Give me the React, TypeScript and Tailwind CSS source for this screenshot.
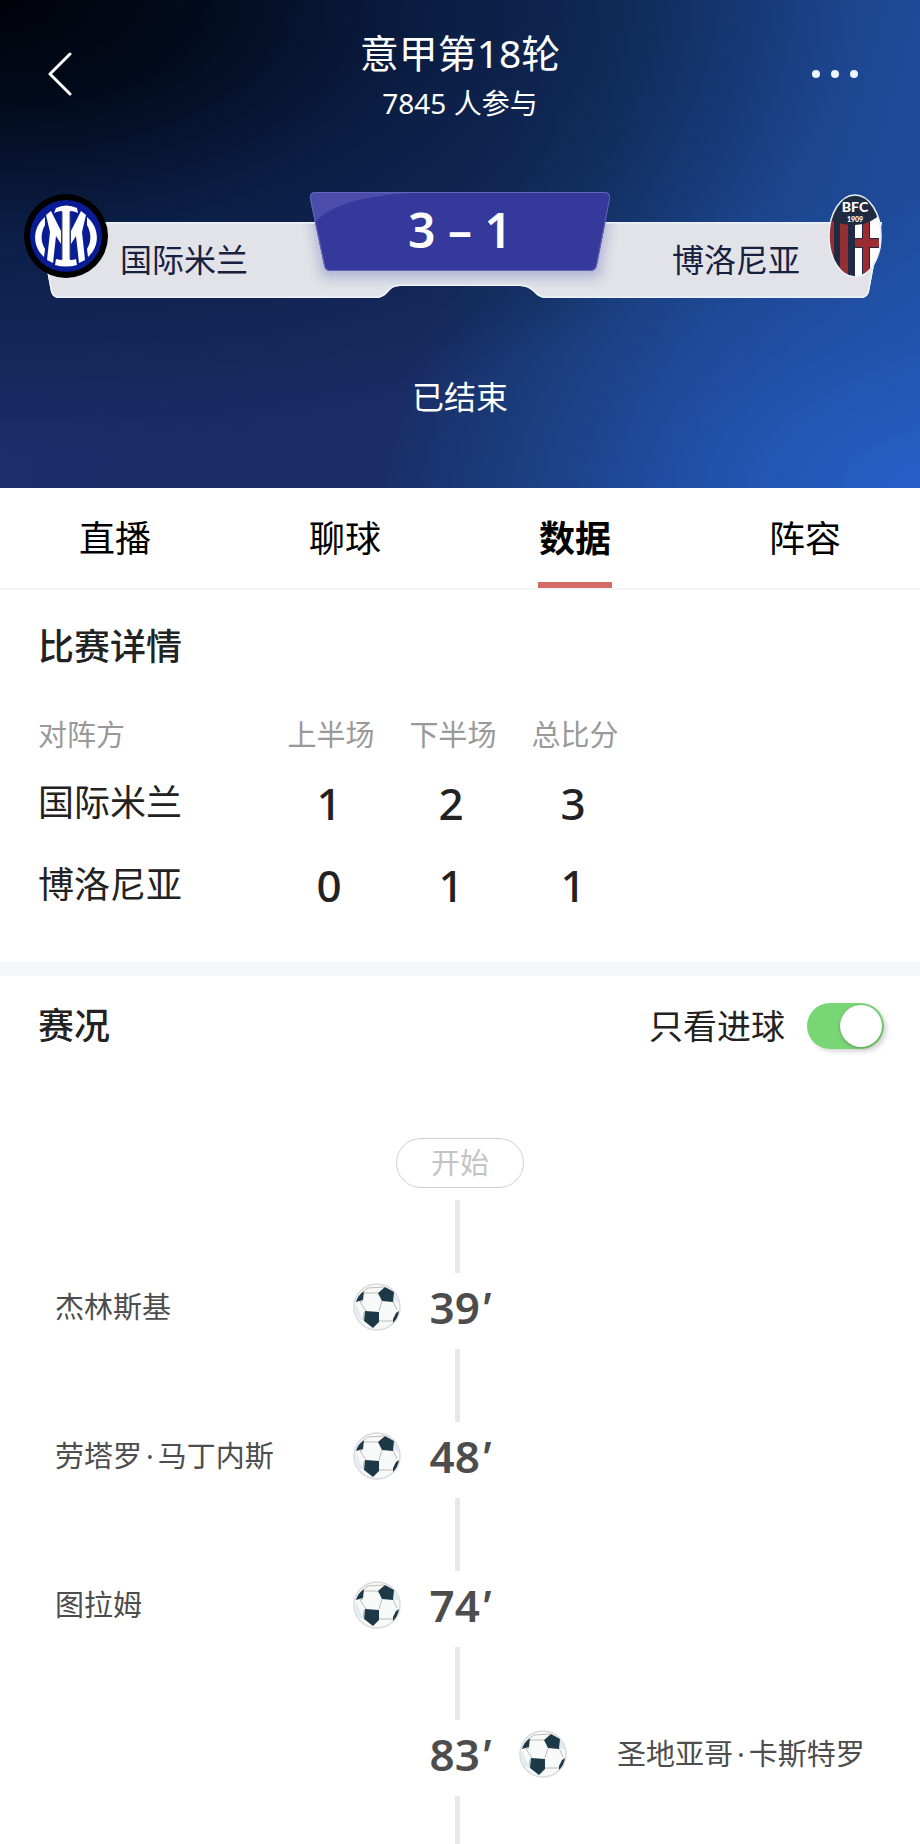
import { useState } from "react";

const tabs = ["直播", "聊球", "数据", "阵容"];

const scores = [
  { team: "国际米兰", first: 1, second: 2, total: 3 },
  { team: "博洛尼亚", first: 0, second: 1, total: 1 },
];

type Goal = { minute: number; player: string; side: "home" | "away" };

const goals: Goal[] = [
  { minute: 39, player: "杰林斯基", side: "home" },
  { minute: 48, player: "劳塔罗·马丁内斯", side: "home" },
  { minute: 74, player: "图拉姆", side: "home" },
  { minute: 83, player: "圣地亚哥·卡斯特罗", side: "away" },
];

function InterLogo() {
  return (
    <svg viewBox="0 0 84 84" className="size-[84px] shrink-0" role="img" aria-label="国际米兰">
      <circle cx="42" cy="42" r="42" fill="#000" />
      <circle cx="42" cy="42" r="36" fill="#0a1b96" />
      <g fill="#fff">
        <path d="M21 23C8 34 8 52 20 63L21 55C16 47 17 38 21 31Z" />
        <path d="M63 23C76 34 76 52 64 63L63 55C68 47 67 38 63 31Z" />
        <path d="M22 21L27 17L37 37V50L32 42L29 69L23 66L26 38Z" />
        <path d="M62 21L57 17L47 37V50L52 42L55 69L61 66L58 38Z" />
        <path d="M30 19L32 14Q42 9 53 14L54 19Q50 17 46 17V66Q50 66 52 65L53 71Q42 74 31 71L32 65Q36 66 38 66V17Q34 17 30 19Z" />
      </g>
      <path d="M38 18V65M46 18V65" stroke="#4a5068" strokeWidth="1" />
    </svg>
  );
}

function BolognaLogo() {
  return (
    <svg viewBox="0 0 54 84" className="h-[84px] w-[54px] shrink-0" role="img" aria-label="博洛尼亚">
      <defs>
        <clipPath id="bfc-oval">
          <ellipse cx="27" cy="42" rx="26" ry="41" />
        </clipPath>
      </defs>
      <g clipPath="url(#bfc-oval)">
        <path fill="#202b42" d="M0 0h54v84H0z" />
        <path fill="#942f35" d="M0 26h6v58H0zM12 28h8v56h-8z" />
        <path fill="#fff" d="M27 28L50 17H54V84H27z" />
        <path fill="#202b42" d="M34 28h8v16h9v10h-9v30h-8V54h-7V44h7z" />
        <path fill="#9c2c32" d="M35 28h6v17h10v8H41v31h-6V53h-8v-8h8z" />
        <path fill="#202b42" d="M0 0H54V18Q43 31 27 31Q12 31 0 25Z" />
      </g>
      <ellipse cx="27" cy="42" rx="26" ry="41" fill="none" stroke="#e8f0fa" strokeWidth="1.5" />
      <text x="27" y="18" textAnchor="middle" fill="#fff" fontSize="14" fontWeight="900" fontFamily="Lato, sans-serif">
        BFC
      </text>
      <text x="27" y="28" textAnchor="middle" fill="#fff" fontSize="7" fontWeight="900" fontFamily="Lato, sans-serif">
        1909
      </text>
    </svg>
  );
}

function Football() {
  return (
    <svg viewBox="0 0 48 48" className="size-12 shrink-0" aria-hidden="true">
      <circle cx="24" cy="24" r="23" fill="#f8f9f9" stroke="#d9dade" strokeWidth="1.5" />
      <g fill="none" stroke="#bdbdb2" strokeWidth="1">
        <path d="M11 10H25M10 18L7 19L13 28M29 18L26 28M40 18L44 27M26 38H40M11 29L10 37M11 8L15 5L31 4" />
      </g>
      <path d="M40 8Q45 13 46 20L41 18ZM3 20Q1 28 6 36L10 38Z" fill="#e2ebf1" />
      <g fill="#1d3947">
        <path d="M32 4L41 9L40 19L29 18L25 10Z" />
        <path d="M12 28L26 29V39L20 45L11 38Z" />
        <path d="M11 8L10 17L3 19Q5 12 11 8Z" />
        <path d="M46 28Q45 35 40 40L40 36L43 30Z" />
      </g>
    </svg>
  );
}

// Slanted plate behind both team names, plus the score badge in the middle
function ScorePlate() {
  return (
    <svg viewBox="0 0 872 108" preserveAspectRatio="none" className="absolute inset-0 size-full" aria-hidden="true">
      <defs>
        <clipPath id="badge-clip">
          <path d="M292 0H580Q587 0 586 7L573 73Q572 79 566 79H306Q301 79 300 73L286 7Q285 0 292 0Z" />
        </clipPath>
        <filter id="badge-shadow" x="-10%" y="-10%" width="120%" height="150%">
          <feGaussianBlur stdDeviation="6" />
        </filter>
        <clipPath id="plate-clip">
          <path d="M14 30H858L845 100Q843 106 837 106H522Q515 106 510 100Q504 94 496 94H376Q368 94 364 100Q359 106 352 106H35Q29 106 27 100Z" />
        </clipPath>
      </defs>
      <path
        d="M14 30H858L845 100Q843 106 837 106H522Q515 106 510 100Q504 94 496 94H376Q368 94 364 100Q359 106 352 106H35Q29 106 27 100Z"
        fill="#e1e3e8"
      />
      <g clipPath="url(#plate-clip)">
        <path d="M284 10H588L576 86H298Z" fill="#7c7fc0" opacity="0.45" filter="url(#badge-shadow)" />
        <path
          d="M14 30H858L845 100Q843 106 837 106H522Q515 106 510 100Q504 94 496 94H376Q368 94 364 100Q359 106 352 106H35Q29 106 27 100Z"
          fill="none"
          stroke="#edf3fc"
          strokeWidth="3"
        />
      </g>
      <g clipPath="url(#badge-clip)">
        <path d="M280 0H590V80H280Z" fill="#36399c" />
        <path d="M280 0H400Q310 4 290 32H280Z" fill="#4c4dab" />
        <path
          d="M292 0H580Q587 0 586 7L573 73Q572 79 566 79H306Q301 79 300 73L286 7Q285 0 292 0Z"
          fill="none"
          stroke="#6165b8"
          strokeWidth="2"
        />
      </g>
    </svg>
  );
}

function MatchHeader() {
  return (
    <header className="bg-[radial-gradient(ellipse_at_0%_0%,#000208_0%,rgba(0,8,22,0.92)_15%,rgba(3,24,54,0.65)_35%,rgba(6,32,74,0)_66%),radial-gradient(ellipse_at_100%_100%,rgba(42,100,212,0.75)_0%,rgba(42,100,212,0.25)_22%,rgba(42,100,212,0)_42%),linear-gradient(106deg,#1e2d6c_0%,#1a2c64_48%,#18376f_60%,#1b4389_75%,#2050a4_100%)] pb-[67px] text-white">
      <div className="grid grid-cols-[1fr_auto_1fr] items-start px-12 pt-7">
        <button type="button" aria-label="返回" className="flex h-23 w-6 items-center">
          <svg viewBox="0 0 24 44" className="h-11 w-6" fill="none" stroke="currentColor" strokeWidth="3">
            <path d="M22 2L2 22L22 42" strokeLinecap="round" strokeLinejoin="round" />
          </svg>
        </button>
        <div className="text-center">
          <h1 className="text-[39px] leading-[50px]">意甲第18轮</h1>
          <p className="text-[28px] leading-[50px]">7845 人参与</p>
        </div>
        <button type="button" aria-label="更多" className="flex h-23 items-center gap-[11px] justify-self-end pr-3.5">
          <span className="size-2 rounded-full bg-[#eef6ff]" />
          <span className="size-2 rounded-full bg-[#eef6ff]" />
          <span className="size-2 rounded-full bg-[#eef6ff]" />
        </button>
      </div>

      <div className="relative mx-6 mt-16 h-[108px]">
        <ScorePlate />
        <div className="relative grid h-22 grid-cols-[1fr_300px_1fr] text-[32px] leading-8 text-[#18203f]">
          <div className="flex items-center gap-3">
            <InterLogo />
            <span className="mt-12">国际米兰</span>
          </div>
          <p className="text-center text-[48px] leading-19 font-semibold text-white">3 – 1</p>
          <div className="flex items-center justify-end gap-7 pr-3.5">
            <span className="mt-12">博洛尼亚</span>
            <BolognaLogo />
          </div>
        </div>
      </div>

      <p className="mt-[73px] text-center text-[32px] leading-12">已结束</p>
    </header>
  );
}

function PlayerName({ name }: { name: string }) {
  const [first, last] = name.split("·");
  return (
    <span>
      {first}
      {last && <span className="mx-1">·</span>}
      {last}
    </span>
  );
}

function GoalRow({ goal }: { goal: Goal }) {
  return (
    <li className="mb-2 grid h-17 grid-cols-[1fr_118px_1fr] items-center text-[29px] text-[#4d4d4d]">
      <div className="flex items-center justify-between pl-[55px]">
        {goal.side === "home" && (
          <>
            <PlayerName name={goal.player} />
            <Football />
          </>
        )}
      </div>
      <span className="text-center text-[44px] leading-16 font-semibold">
        {goal.minute}
        <i>'</i>
      </span>
      <div className="flex items-center gap-[50px]">
        {goal.side === "away" && (
          <>
            <Football />
            <PlayerName name={goal.player} />
          </>
        )}
      </div>
    </li>
  );
}

export default function App() {
  const [activeTab, setActiveTab] = useState("数据");
  const [goalsOnly, setGoalsOnly] = useState(true);

  return (
    <div className="flex min-h-screen flex-col bg-white font-['Noto_Sans','Noto_Sans_CJK_SC',sans-serif] text-[#222]">
      <MatchHeader />

      <nav className="grid grid-cols-4 border-b-2 border-[#f5f5f5]">
        {tabs.map((tab) => (
          <button
            key={tab}
            type="button"
            onClick={() => setActiveTab(tab)}
            className={
              tab === activeTab
                ? "flex h-[100px] flex-col items-center pt-2 text-[36px] leading-[86px] font-bold text-black"
                : "flex h-[100px] flex-col items-center pt-2 text-[36px] leading-[86px] text-black"
            }
          >
            {tab}
            {tab === activeTab && <span className="h-1.5 w-[74px] shrink-0 bg-[#d66a66]" />}
          </button>
        ))}
      </nav>

      <section className="px-[38px] pt-8 pb-9">
        <h2 className="text-[36px] leading-[50px] font-medium">比赛详情</h2>
        <table className="mt-9 table-fixed text-left">
          <thead className="text-[29px] text-[#999]">
            <tr className="h-[54px]">
              <th className="w-[232px] font-normal">对阵方</th>
              <th className="w-[122px] text-center font-normal">上半场</th>
              <th className="w-[122px] text-center font-normal">下半场</th>
              <th className="w-[122px] text-center font-normal">总比分</th>
            </tr>
          </thead>
          <tbody>
            {scores.map((row) => (
              <tr key={row.team} className="h-[82px] text-center text-[44px] leading-[50px] font-medium">
                <th className="text-left text-[36px] font-normal">{row.team}</th>
                <td className="pr-1">{row.first}</td>
                <td className="pr-1">{row.second}</td>
                <td className="pr-1">{row.total}</td>
              </tr>
            ))}
          </tbody>
        </table>
      </section>

      <div className="h-3.5 bg-[#f4f6f9]" />

      <section className="flex flex-1 flex-col">
        <div className="flex h-25 items-center justify-between pr-9 pl-[38px]">
          <h2 className="text-[36px] font-medium">赛况</h2>
          <label className="flex items-center gap-[22px] text-[34px]">
            只看进球
            <input
              type="checkbox"
              role="switch"
              checked={goalsOnly}
              onChange={(e) => setGoalsOnly(e.target.checked)}
              className="h-[46px] w-[77px] appearance-none rounded-full bg-gray-300 p-0.5 shadow-[3px_3px_4px_rgba(0,0,0,0.15)] before:block before:size-[42px] before:rounded-full before:bg-white before:shadow-[0_1px_3px_rgba(0,0,0,0.3)] checked:bg-[#78d674] checked:before:ml-auto"
            />
          </label>
        </div>

        <div className="mt-[62px] flex justify-center">
          <span className="rounded-full border border-[#cfcfcf] px-[34px] text-[29px] leading-12 text-[#c4c4c4]">
            开始
          </span>
        </div>

        <ol className="mt-3 flex flex-1 flex-col">
          {goals.map((goal) => (
            <div key={goal.minute} className="contents">
              <li aria-hidden="true" className="flex h-[73px] justify-center pr-[5px]">
                <span className="w-[5px] bg-[#e8e8e8]" />
              </li>
              <GoalRow goal={goal} />
            </div>
          ))}
          <li aria-hidden="true" className="flex flex-1 justify-center pr-[5px]">
            <span className="w-[5px] bg-[#e8e8e8]" />
          </li>
        </ol>
      </section>
    </div>
  );
}
